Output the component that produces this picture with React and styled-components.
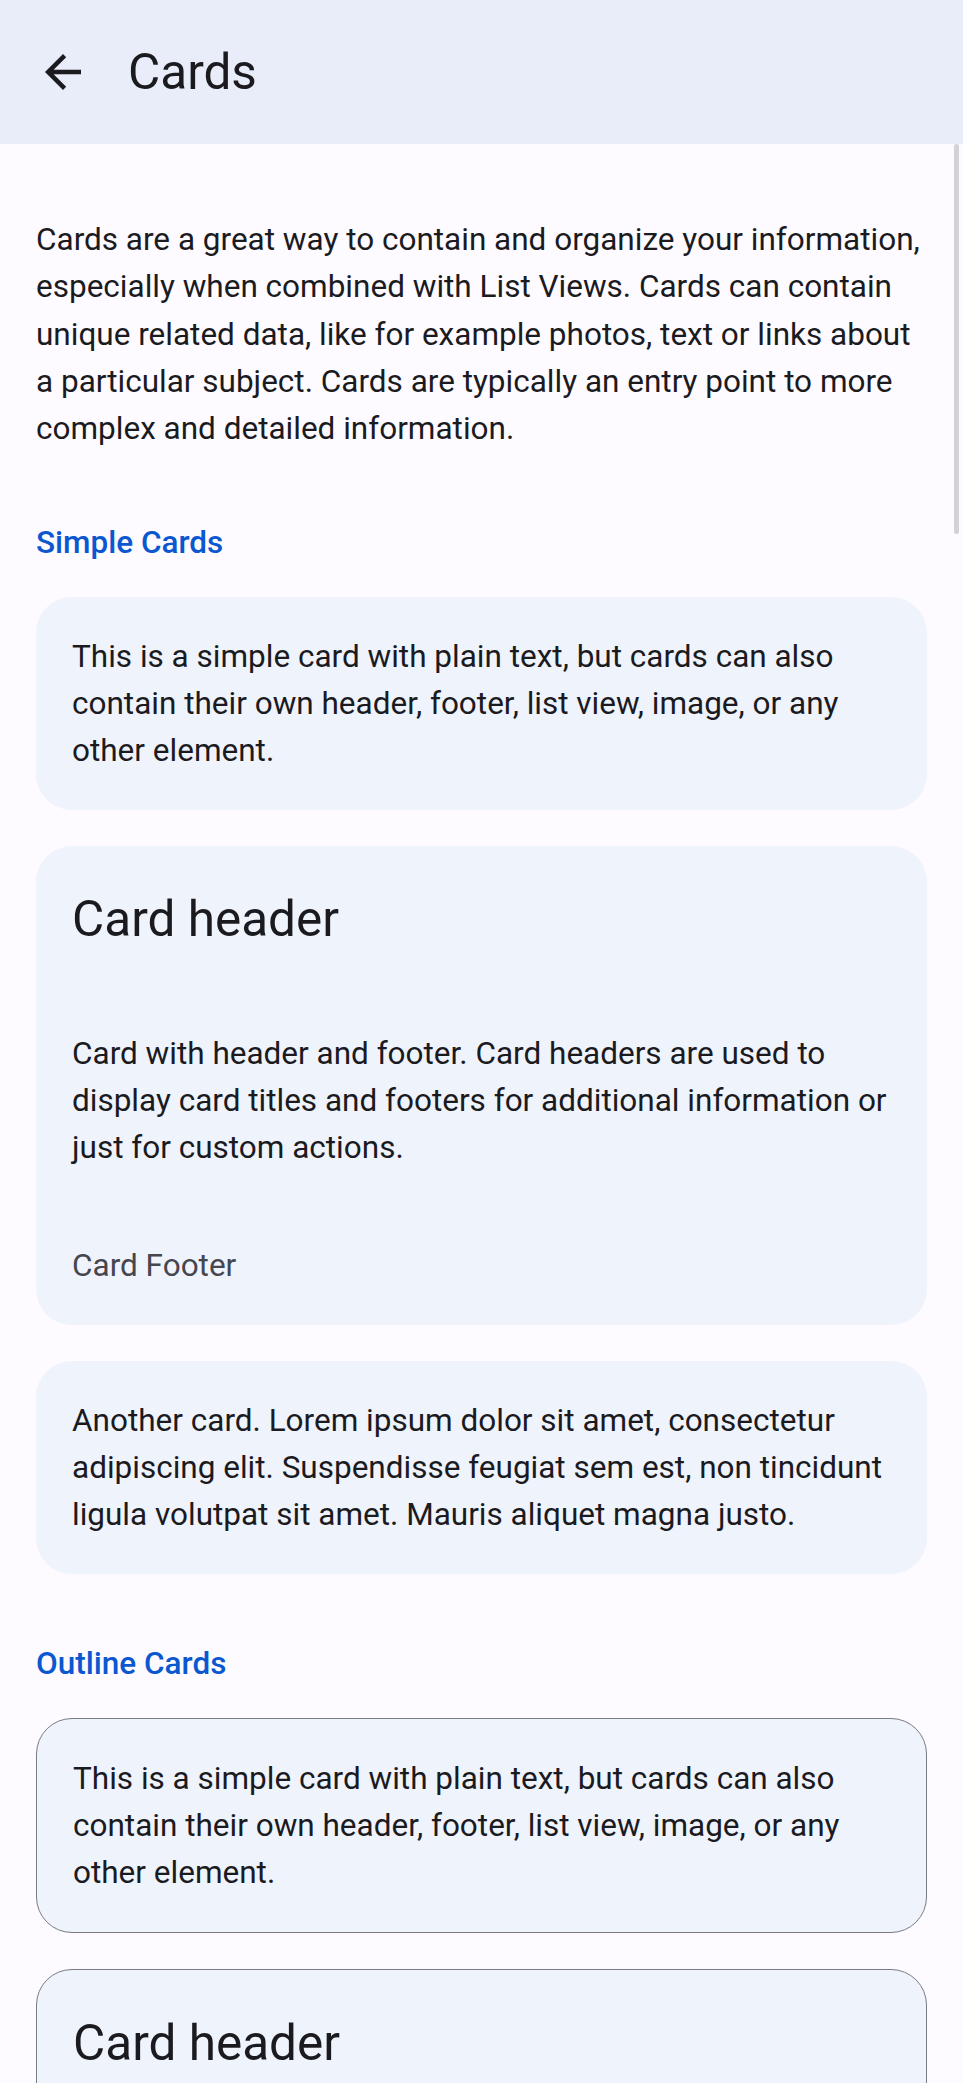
import styled, { createGlobalStyle } from "styled-components";

const GlobalStyle = createGlobalStyle`
    html {
        overflow: hidden;
    }
    body {
        margin: 0;
        background: #fdfbff;
        font-family: Roboto, "Noto Sans", sans-serif;
        color: #1b1b1f;
        -webkit-font-smoothing: antialiased;
    }
`;

const Page = styled.div`
    position: relative;
    width: 963px;
    min-height: 2083px;
`;

const Navbar = styled.header`
    display: flex;
    align-items: center;
    height: 144px;
    padding-left: 36px;
    background: #e8edf9;
`;

const BackButton = styled.button`
    display: flex;
    align-items: center;
    justify-content: center;
    width: 54px;
    height: 54px;
    padding: 0;
    border: none;
    background: none;
    color: #1b1b1f;
    cursor: pointer;
`;

const Title = styled.h1`
    margin: 0 0 0 38px;
    font-size: 49.5px;
    font-weight: 400;
    color: #1b1b1f;
`;

const Content = styled.main`
    padding: 0 36px 72px;
`;

const Intro = styled.p`
    margin: 72px 0 0;
    font-size: 31.5px;
    line-height: 1.5;
`;

const Section = styled.section`
    margin-top: ${({ $first }) => ($first ? "73px" : "72px")};
`;

const BlockTitle = styled.h2`
    margin: 0 0 36px;
    font-size: 31.5px;
    line-height: 36px;
    font-weight: 500;
    color: #0b57d0;
`;

const CardList = styled.div`
    display: flex;
    flex-direction: column;
    gap: 36px;
`;

const Card = styled.div`
    background: #eff3fc;
    border-radius: 36px;
    border: ${({ $outline }) => ($outline ? "1.5px solid #787b84" : "none")};
    overflow: hidden;
`;

const CardHeader = styled.div`
    display: flex;
    align-items: center;
    min-height: 147.5px;
    padding: 0 36px;
    font-size: 49.5px;
    line-height: 1.2;
`;

const CardBody = styled.div`
    padding: 36px;
    font-size: 31.5px;
    line-height: 47px;
`;

const CardFooter = styled.div`
    display: flex;
    align-items: center;
    min-height: 118px;
    padding: 0 36px;
    font-size: 31.5px;
    line-height: 47px;
    color: #46464f;
`;

const Scrollbar = styled.div`
    position: absolute;
    top: 144px;
    left: 954px;
    width: 5px;
    height: 390px;
    border-radius: 3px;
    background: #d2d2d7;
`;

const ArrowBack = () => (
    <svg width="54" height="54" viewBox="0 0 24 24" fill="currentColor">
        <path d="M20 11H7.83l5.59-5.59L12 4l-8 8 8 8 1.41-1.41L7.83 13H20v-2z"/>
    </svg>
);

const simpleText =
    "This is a simple card with plain text, but cards can also contain their own header, footer, list view, image, or any other element.";
const headerText =
    "Card with header and footer. Card headers are used to display card titles and footers for additional information or just for custom actions.";
const loremText =
    "Another card. Lorem ipsum dolor sit amet, consectetur adipiscing elit. Suspendisse feugiat sem est, non tincidunt ligula volutpat sit amet. Mauris aliquet magna justo.";

const CardGroup = ({ outline }) => (
    <CardList>
        <Card $outline={outline}>
            <CardBody>{simpleText}</CardBody>
        </Card>
        <Card $outline={outline}>
            <CardHeader>Card header</CardHeader>
            <CardBody>{headerText}</CardBody>
            <CardFooter>Card Footer</CardFooter>
        </Card>
        <Card $outline={outline}>
            <CardBody>{loremText}</CardBody>
        </Card>
    </CardList>
);

export default function App() {
    return (
        <Page>
            <GlobalStyle/>
            <Navbar>
                <BackButton aria-label="Back">
                    <ArrowBack/>
                </BackButton>
                <Title>Cards</Title>
            </Navbar>
            <Content>
                <Intro>
                    Cards are a great way to contain and organize your information, especially when combined with
                    List Views. Cards can contain unique related data, like for example photos, text or links about
                    a particular subject. Cards are typically an entry point to more complex and detailed information.
                </Intro>
                <Section $first>
                    <BlockTitle>Simple Cards</BlockTitle>
                    <CardGroup/>
                </Section>
                <Section>
                    <BlockTitle>Outline Cards</BlockTitle>
                    <CardGroup outline/>
                </Section>
            </Content>
            <Scrollbar/>
        </Page>
    );
}
